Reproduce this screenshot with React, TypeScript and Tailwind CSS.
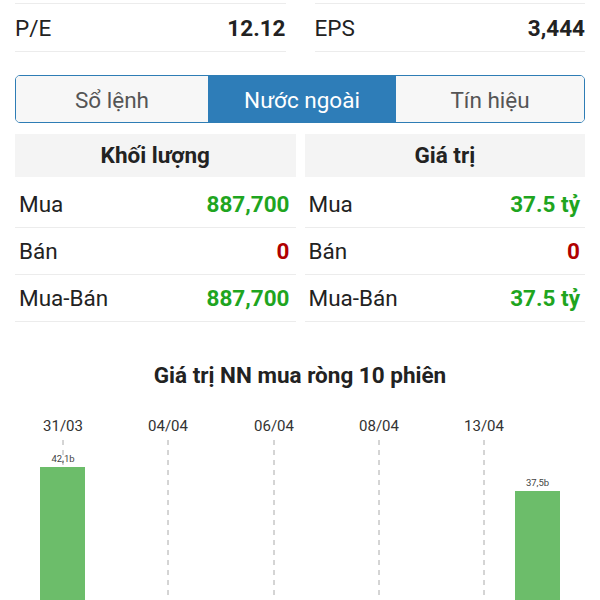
import React from "react";

const rows = [
  { label: "Mua", vol: "887,700", val: "37.5 tỷ", color: "text-[#1fa51f]" },
  { label: "Bán", vol: "0", val: "0", color: "text-[#b00000]" },
  { label: "Mua-Bán", vol: "887,700", val: "37.5 tỷ", color: "text-[#1fa51f]" },
];

const dates = [
  { x: 63, d: "31/03" },
  { x: 168, d: "04/04" },
  { x: 274, d: "06/04" },
  { x: 379, d: "08/04" },
  { x: 484, d: "13/04" },
];

const Chart = () => (
  <svg width="600" height="200" viewBox="0 400 600 200" className="block">
    {dates.map((it) => (
      <g key={it.d}>
        <text
          x={it.x}
          y={431}
          textAnchor="middle"
          fontSize="15"
          fill="#333"
          fontFamily="Roboto, sans-serif"
        >
          {it.d}
        </text>
        <line
          x1={it.x}
          x2={it.x}
          y1={440}
          y2={600}
          stroke="#aaa"
          strokeWidth="1"
          strokeDasharray="5 5"
        />
      </g>
    ))}
    <rect x={40} y={467} width={45} height={140} fill="#6cbd6a" />
    <rect x={515} y={491} width={45} height={120} fill="#6cbd6a" />
    <text x={63} y={462} textAnchor="middle" fontSize="9.5" fill="#444" fontFamily="Roboto, sans-serif">
      42,1b
    </text>
    <text x={537.5} y={486} textAnchor="middle" fontSize="9.5" fill="#444" fontFamily="Roboto, sans-serif">
      37,5b
    </text>
  </svg>
);

const App = () => {
  return (
    <div className="w-[600px] h-[600px] overflow-hidden bg-white font-['Roboto',sans-serif] text-[#222]">
      {/* chỉ số */}
      <div className="grid grid-cols-2 gap-x-[29px] px-[15px]">
        <div className="h-[4px] border-b border-[#ececec]" />
        <div className="h-[4px] border-b border-[#ececec]" />
        <div className="h-[48px] flex items-center justify-between border-b border-[#ececec] text-[22.5px] pt-[2px]">
          <span>P/E</span>
          <span className="font-bold">12.12</span>
        </div>
        <div className="h-[48px] flex items-center justify-between border-b border-[#ececec] text-[22.5px] pt-[2px]">
          <span>EPS</span>
          <span className="font-bold">3,444</span>
        </div>
      </div>

      {/* tabs */}
      <div className="mx-[15px] mt-[23px] h-[48px] grid grid-cols-[192px_188px_1fr] rounded-[5px] border-[1.5px] border-[#2e7db5] overflow-hidden text-[22.5px]">
        <div className="flex items-center justify-center pt-[3px] bg-[#f7f7f7] text-[#555]">Sổ lệnh</div>
        <div className="flex items-center justify-center pt-[3px] bg-[#2e7db8] text-white">Nước ngoài</div>
        <div className="flex items-center justify-center pt-[3px] bg-[#f7f7f7] text-[#555]">Tín hiệu</div>
      </div>

      {/* bảng */}
      <div className="mt-[11px] px-[15px] grid grid-cols-2 gap-x-[9px]">
        <div>
          <div className="h-[43px] bg-[#f4f4f4] flex items-center justify-center text-[22.5px] font-bold">
            Khối lượng
          </div>
          <div className="mt-[4px]">
            {rows.map((r) => (
              <div
                key={r.label}
                className="h-[47px] flex items-center justify-between border-b border-[#ececec] pl-[4px] pr-[6px] pt-[2px] text-[22.5px]"
              >
                <span>{r.label}</span>
                <span className={"font-bold " + r.color}>{r.vol}</span>
              </div>
            ))}
          </div>
        </div>
        <div>
          <div className="h-[43px] bg-[#f4f4f4] flex items-center justify-center text-[22.5px] font-bold">
            Giá trị
          </div>
          <div className="mt-[4px]">
            {rows.map((r) => (
              <div
                key={r.label}
                className="h-[47px] flex items-center justify-between border-b border-[#ececec] pl-[4px] pr-[5px] pt-[2px] text-[22.5px]"
              >
                <span>{r.label}</span>
                <span className={"font-bold " + r.color}>{r.val}</span>
              </div>
            ))}
          </div>
        </div>
      </div>

      {/* biểu đồ */}
      <div className="mt-[40px] text-center text-[22.5px] font-bold leading-[26px]">
        Giá trị NN mua ròng 10 phiên
      </div>
      <div className="mt-[12px]">
        <Chart />
      </div>
    </div>
  );
};

export default App;
